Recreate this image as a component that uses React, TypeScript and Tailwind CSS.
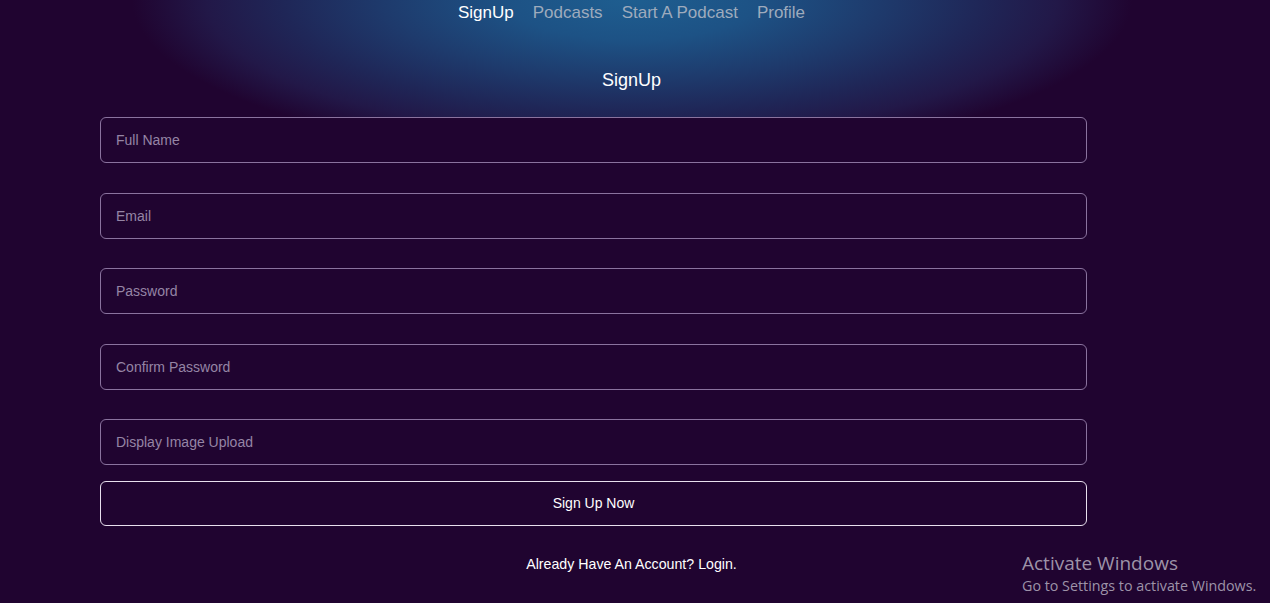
import React from "react";

const fields = ["Full Name", "Email", "Password", "Confirm Password", "Display Image Upload"];
const gaps = ["mt-[25px]", "mt-[30px]", "mt-[29px]", "mt-[30px]", "mt-[29px]"];

export default function App() {
  return (
    <div
      className="relative min-h-screen h-[603px] w-full overflow-hidden bg-[#200430]"
      style={{ fontFamily: '"Liberation Sans", Arial, sans-serif' }}
    >
      <div className="absolute inset-0 bg-[radial-gradient(ellipse_500px_160px_at_632px_0px,#1e5e90_0%,#1d5285_25%,#1e3a6c_50%,#1f2657_70%,#221848_85%,transparent_100%)]" />
      <div className="relative w-[1263px]">
        <nav className="flex h-6 items-center justify-center gap-[19px] pt-px text-[17px] leading-6">
          <a className="text-white">SignUp</a>
          <a className="text-[#9eabbd]">Podcasts</a>
          <a className="text-[#9eabbd]">Start A Podcast</a>
          <a className="text-[#9eabbd]">Profile</a>
        </nav>
        <h1 className="mt-[43px] pt-px text-center text-[18px] leading-6 text-white">SignUp</h1>
        <form className="ml-[100px] flex w-[987px] flex-col">
          {fields.map((f, i) => (
            <input
              key={f}
              placeholder={f}
              className={`${gaps[i]} h-[46px] w-full rounded-[6px] border border-[#8a739e] bg-[#200430] px-[15px] text-[14px] text-white outline-none placeholder:text-[#9585a5]`}
            />
          ))}
          <button
            type="button"
            className="mt-[16px] h-[45px] w-full rounded-[6px] border border-[#e8e0ee] bg-[#200430] text-[14px] text-white"
          >
            Sign Up Now
          </button>
        </form>
        <p className="mt-[28px] text-center text-[14.2px] leading-5 text-white">
          Already Have An Account? Login.
        </p>
      </div>
      <div
        className="absolute left-[1022px] top-[550px] text-[#9d93a8]"
        style={{ fontFamily: '"Open Sans", "Noto Sans", sans-serif' }}
      >
        <div className="text-[19px] leading-[26px]">Activate Windows</div>
        <div className="text-[14.3px] leading-[19px]">Go to Settings to activate Windows.</div>
      </div>
    </div>
  );
}
